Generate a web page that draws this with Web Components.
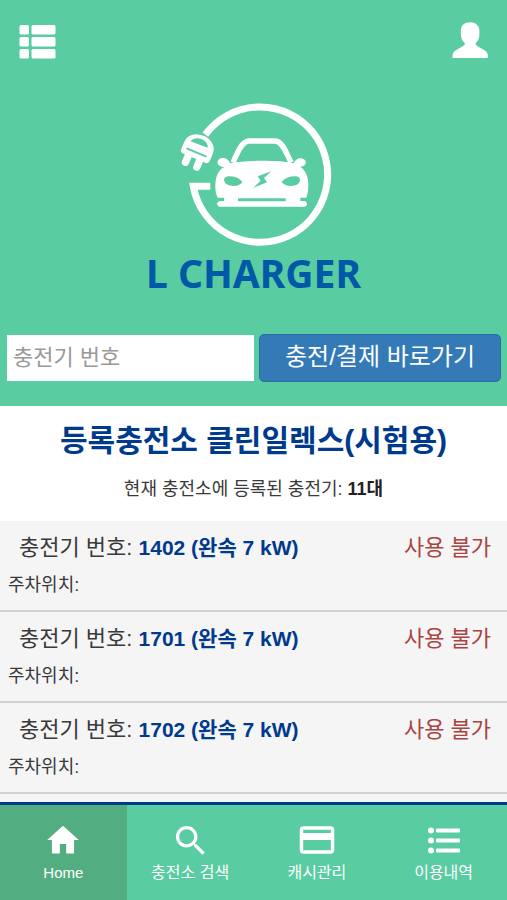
<!DOCTYPE html>
<html lang="ko">
<head>
<meta charset="utf-8">
<meta name="viewport" content="width=device-width, initial-scale=1">
<title>L CHARGER</title>
<style>
:root { --green: #5acca1; --navy: #003a8c; }
body { margin: 0; font-family: "Liberation Sans", "Noto Sans CJK KR", sans-serif; color: #3a3a3a; background: #f5f5f5; }
</style>
</head>
<body>
<charger-app></charger-app>
<script>
const define = (name, html) => {
  const template = document.createElement('template');
  template.innerHTML = html;
  customElements.define(name, class extends HTMLElement {
    constructor() {
      super();
      this.attachShadow({ mode: 'open' }).append(template.content.cloneNode(true));
    }
  });
};

define('top-bar', `
<style>
:host { display: flex; justify-content: space-between; align-items: flex-start; padding: 22px 18px 0 18px; }
button { display: block; padding: 0; border: 0; background: none; color: #fff; height: 40px; }
svg { display: block; }
</style>
<button type="button" aria-label="메뉴">
<svg width="40" height="40" viewBox="0 0 40 40" fill="currentColor">
<rect x="1.5" y="3" width="9.5" height="9.5" rx="1.5"/><rect x="13.5" y="3" width="24" height="9.5" rx="1.5"/>
<rect x="1.5" y="15" width="9.5" height="9.5" rx="1.5"/><rect x="13.5" y="15" width="24" height="9.5" rx="1.5"/>
<rect x="1.5" y="27" width="9.5" height="9.5" rx="1.5"/><rect x="13.5" y="27" width="24" height="9.5" rx="1.5"/>
</svg></button>
<button type="button" aria-label="내 정보">
<svg width="38" height="40" viewBox="0 0 38 40" fill="currentColor">
<path d="M19 .2C13.500 .2 9.800 3.500 9.800 9c0 2 .1 4 .4 6 .4 2.500 1.700 4.500 3.500 6v1.600c-1.200 2-9.300 5.400-11.200 7.800-.9 1.200-1 3-1 5.600h35.400c0-2.600-.1-4.400-1-5.600-1.900-2.400-10-5.800-11.200-7.800V21c1.800-1.500 3.100-3.500 3.400-6 .3-2 .3-4 .3-6C28.400 3.500 24.500 .2 19 .2z"/>
</svg></button>`);

define('brand-logo', `
<style>
:host { display: flex; flex-direction: column; align-items: center; color: #fff; }
svg { display: block; }
h1 { margin: 0; font: bold 39px/48px "Noto Sans", "Open Sans", sans-serif; color: #0059a6; }
</style>
<svg width="170" height="151" viewBox="-2 4 510 453" fill="none" stroke="currentColor" aria-hidden="true">
<path d="M107 114A203 203 0 1 1 71 269H122" stroke-width="21"/>
<g transform="translate(88 150) rotate(23)" fill="#fff" stroke="#fff">
<path d="M-43 27V5C-43-44 43-44 43 5V27Q43 34 34 34H-34Q-43 34-43 27Z" stroke-width="7" stroke-linejoin="round"/>
<path d="M-19 36V59M18 36V59" stroke-width="22" stroke-linecap="round"/>
<path d="M-30-5C-24-29 19-31 25-7Z" fill="#5acca1" stroke="none"/>
<path d="M-30 19H30" stroke="#5acca1" stroke-width="6" stroke-linecap="round"/>
</g>
<path d="M190 198C202 170 216 133 238 133H316C340 133 351 174 365 198" stroke-width="16"/>
<path fill="#fff" stroke="none" d="M182 200C220 190 334 190 372 200C378 187 390 182 402 187Q412 193 407 203Q403 210 392 211C409 220 417 245 416 267Q416 289 410 303H392V313H405Q412 315 412 322Q411 330 403 330H150Q143 329 142 321Q143 315 150 313H163V303H144Q136 289 137 267C137 240 146 219 164 211Q147 210 144 201C142 190 151 182 162 184Q173 184 182 200Z"/>
<path fill="#5acca1" stroke="none" d="M163 251Q163 239 179 239Q203 239 218 255Q213 267 192 268Q167 268 163 251ZM391 251Q391 239 377 239Q351 239 336 255Q343 267 364 268Q388 268 391 251ZM305 224L264 239L273 252L250 274L292 257L283 244ZM205 305H348V314H205Z"/>
</svg>
<h1>L CHARGER</h1>`);

define('charge-form', `
<style>
:host { display: block; padding: 0 6px 0 7px; }
form { display: grid; grid-template-columns: 247fr 242fr; gap: 5px; align-items: center; margin: 0; }
input, button { box-sizing: border-box; width: 100%; min-width: 0; font: 22px/30px "Liberation Sans", "Noto Sans CJK KR", sans-serif; }
input { height: 46px; padding: 0 5px; border: 1px solid #fff; border-radius: 0; background: #fff; color: #333; }
input::placeholder { color: #999; opacity: 1; }
button { height: 48px; padding: 0 4px 2px; border: 1px solid #2e6da4; border-radius: 5px; background: #337ab7; color: #fff; font-size: 24px; white-space: nowrap; }
</style>
<form onsubmit="return false">
<input type="text" placeholder="충전기 번호" aria-label="충전기 번호">
<button type="submit">충전/결제 바로가기</button>
</form>`);

define('station-title', `
<style>
:host { display: block; padding: 14px 8px 17px; background: #fff; text-align: center; }
h2 { margin: 0; font-size: 30px; line-height: 42px; color: var(--navy); }
p { margin: 12px 0 0; font-size: 18px; line-height: 30px; }
b { color: #222; }
</style>
<h2><slot name="name"></slot></h2>
<p>현재 충전소에 등록된 충전기: <b><slot name="count"></slot></b></p>`);

define('charger-row', `
<style>
:host { display: block; padding: 10px 8px 10px; border-bottom: 2px solid #d2d2d2; background: #f5f5f5; }
div { display: flex; justify-content: space-between; gap: 12px; padding: 0 8px 0 11px; font-size: 22px; line-height: 34px; }
b { color: var(--navy); font-size: 21px; }
.status { color: #a94442; white-space: nowrap; }
p { margin: 6px 0 0; font-size: 18px; line-height: 29px; }
</style>
<div><span>충전기 번호: <b><slot></slot></b></span><span class="status"><slot name="status"></slot></span></div>
<p>주차위치:</p>`);

define('nav-item', `
<style>
:host { display: block; }
:host([active]) { background: #52ae80; }
a { display: flex; flex-direction: column; align-items: center; padding: 16px 0 14px; color: #fff; text-decoration: none; font-size: 16px; line-height: 26px; }
span { margin-top: 1px; }
:host([active]) a { font-size: 15px; }
</style>
<a href="#"><slot name="icon"></slot><span><slot></slot></span></a>`);

define('tab-bar', `
<style>
:host { display: block; position: sticky; bottom: 0; border-top: 3px solid var(--navy); background: var(--green); }
nav { display: grid; grid-template-columns: repeat(4, 1fr); }
svg { display: block; }
</style>
<nav>
<nav-item active><svg slot="icon" width="40" height="38" viewBox="0 0 24 24" fill="#fff"><path d="M10 20.500v-6h4v6h5v-8.500h3L12 3 2 12h3v8.500z"/></svg>Home</nav-item>
<nav-item><svg slot="icon" width="40" height="38" viewBox="0 0 23 23" fill="#fff"><path d="M15.500 14h-.79l-.28-.27C15.410 12.590 16 11.110 16 9.500 16 5.910 13.090 3 9.500 3S3 5.910 3 9.500 5.910 16 9.500 16c1.610 0 3.090-.59 4.230-1.570l.27.28v.79l5 4.990L20.490 19l-4.990-5zm-6 0C7.010 14 5 11.990 5 9.500S7.010 5 9.500 5 14 7.010 14 9.500 11.990 14 9.500 14z"/></svg>충전소 검색</nav-item>
<nav-item><svg slot="icon" width="40" height="38" viewBox="1 1 22 22" fill="#fff"><path d="M20 4H4c-1.110 0-1.990.89-1.990 2L2 18c0 1.110.89 2 2 2h16c1.110 0 2-.89 2-2V6c0-1.110-.89-2-2-2zm0 14H4v-6h16v6zm0-10H4V6h16v2z"/></svg>캐시관리</nav-item>
<nav-item><svg slot="icon" width="38" height="38" viewBox="0 0 38 38" fill="#fff"><circle cx="6" cy="9.500" r="3"/><circle cx="6" cy="19.500" r="3"/><circle cx="6" cy="29.500" r="3"/><rect x="11" y="7.500" width="24" height="4" rx="1"/><rect x="11" y="17.500" width="24" height="4" rx="1"/><rect x="11" y="27.500" width="24" height="4" rx="1"/></svg>이용내역</nav-item>
</nav>`);

define('charger-app', `
<style>
:host { display: flex; flex-direction: column; min-height: 100vh; }
header { background: var(--green); padding-bottom: 24px; }
brand-logo { margin-top: 36px; }
charge-form { margin-top: 37px; }
main { flex: 1; }
</style>
<header><top-bar></top-bar><brand-logo></brand-logo><charge-form></charge-form></header>
<main>
<station-title><span slot="name">등록충전소 클린일렉스(시험용)</span><span slot="count">11대</span></station-title>
<charger-row>1402 (완속 7 kW)<span slot="status">사용 불가</span></charger-row>
<charger-row>1701 (완속 7 kW)<span slot="status">사용 불가</span></charger-row>
<charger-row>1702 (완속 7 kW)<span slot="status">사용 불가</span></charger-row>
</main>
<tab-bar></tab-bar>`);
</script>
</body>
</html>
